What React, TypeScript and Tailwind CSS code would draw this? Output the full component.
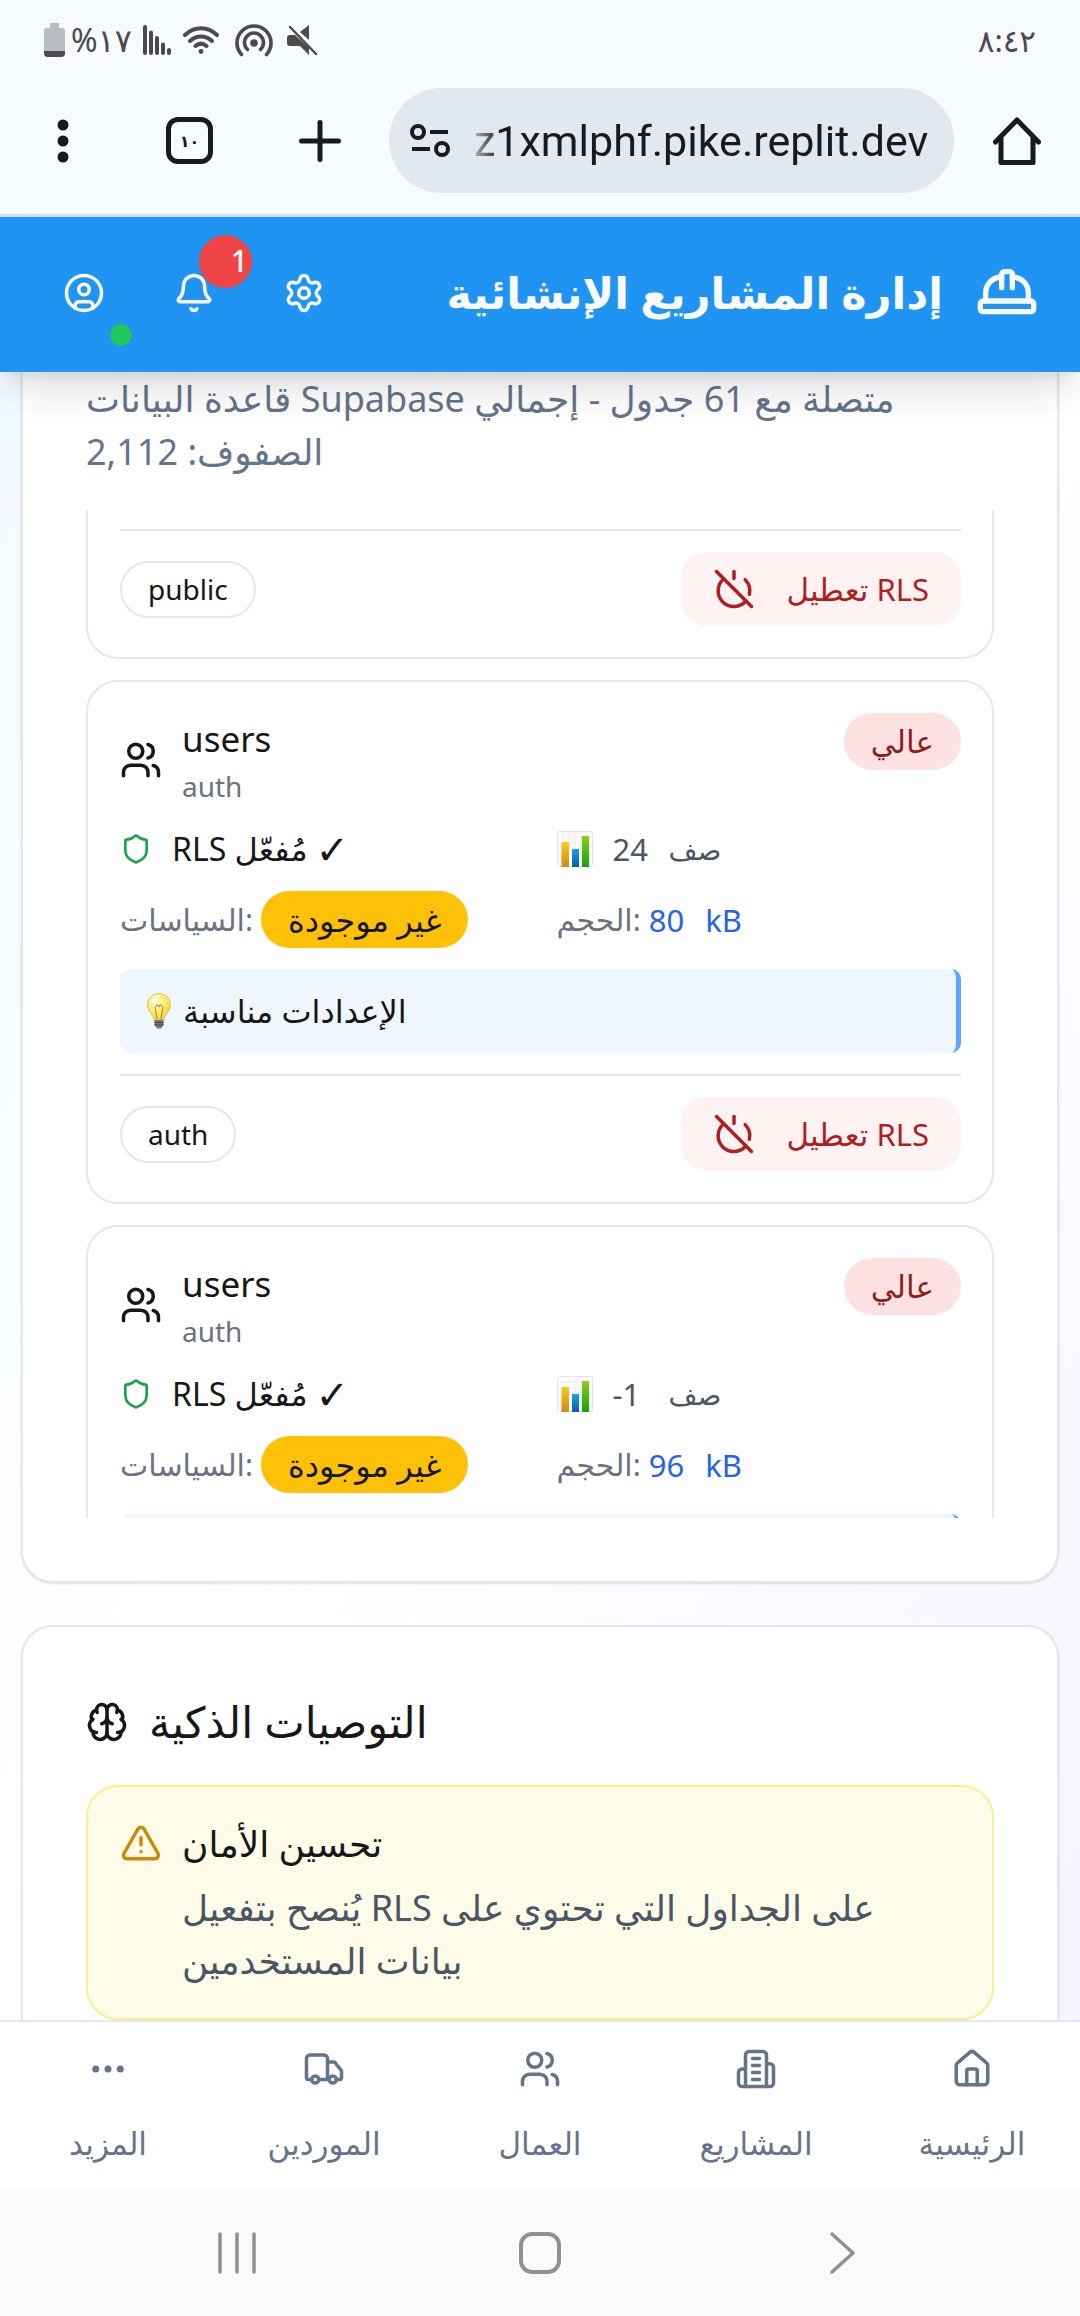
import React from "react";
import { AlertTriangle, Bell, Brain, CircleUser, Ellipsis, HardHat, House, PowerOff, Settings, Shield, Truck, Users } from "lucide-react";

type TableInfo = { rows: string; size: string; hint?: string; schema?: string };

const tables: TableInfo[] = [
  { rows: "24", size: "80", hint: "الإعدادات مناسبة", schema: "auth" },
  { rows: "-1", size: "96" },
];

function BuildingIcon() {
  return (
    <svg viewBox="0 0 24 24" className="size-[42px]" fill="none" stroke="currentColor" strokeWidth="2" strokeLinecap="round" strokeLinejoin="round">
      <path d="M6 22V4a2 2 0 0 1 2-2h8a2 2 0 0 1 2 2v18Z" />
      <path d="M6 12H4a2 2 0 0 0-2 2v6a2 2 0 0 0 2 2h2" />
      <path d="M18 9h2a2 2 0 0 1 2 2v9a2 2 0 0 1-2 2h-2" />
      <path d="M10 6h4M10 10h4M10 14h4M10 18h4" />
    </svg>
  );
}

function ChartEmoji() {
  return (
    <svg viewBox="0 0 36 36" className="size-9 shrink-0" role="img" aria-label="📊">
      <defs>
        <linearGradient id="barY" x1="0" y1="0" x2="0" y2="1"><stop offset="0" stopColor="#fbc91b" /><stop offset="1" stopColor="#d08a14" /></linearGradient>
        <linearGradient id="barB" x1="0" y1="0" x2="0" y2="1"><stop offset="0" stopColor="#18a5e2" /><stop offset="1" stopColor="#0a5ba0" /></linearGradient>
        <linearGradient id="barG" x1="0" y1="0" x2="0" y2="1"><stop offset="0" stopColor="#8fd014" /><stop offset="1" stopColor="#12a012" /></linearGradient>
      </defs>
      <rect x="0.5" y="0.5" width="35" height="35" rx="2" fill="#fafafa" stroke="#e4e4e4" />
      <path d="M6 1v34M12 1v34M18 1v34M24 1v34M30 1v34M1 6h34M1 12h34M1 18h34M1 24h34M1 30h34" stroke="#ececec" strokeWidth="0.7" />
      <rect x="4.500" y="11" width="7.500" height="25" fill="url(#barY)" />
      <rect x="15" y="18" width="7" height="18" fill="url(#barB)" />
      <rect x="25" y="5" width="7" height="31" fill="url(#barG)" />
    </svg>
  );
}

function BulbEmoji() {
  return (
    <svg viewBox="0 0 24 36" className="h-9 w-6 shrink-0" role="img" aria-label="💡">
      <defs>
        <radialGradient id="glow" cx="0.4" cy="0.3" r="0.8"><stop offset="0" stopColor="#fffbd0" /><stop offset="0.5" stopColor="#fcec6a" /><stop offset="1" stopColor="#e8c93c" /></radialGradient>
      </defs>
      <path d="M12 .5C5.500.5.500 5.500.500 12c0 5 3 7.500 5 10.500 1 1.700 1.500 3 1.700 4.500h9.600c.2-1.500.7-2.800 1.700-4.500 2-3 5-5.500 5-10.500C23.500 5.500 18.500.5 12 .5Z" fill="url(#glow)" stroke="#d3b64a" strokeWidth="0.8" />
      <path d="M10 26 8 14l2.500-2.500L12 14l1.500-2.500L16 14l-2 12" fill="none" stroke="#a8861f" strokeWidth="1" />
      <ellipse cx="7.500" cy="7" rx="3" ry="4" fill="#fff" opacity=".7" transform="rotate(35 7.500 7)" />
      <path d="M7.500 27h9v5l-2.500 3.500h-4L7.500 32Z" fill="#77797c" />
      <path d="M7.500 29.500h9M7.500 32h9" stroke="#3f4246" strokeWidth="1" />
    </svg>
  );
}

function StatusBar() {
  return (
    <div className="flex h-20 shrink-0 items-center justify-between px-11 text-[#4a4b4d]">
      <div className="flex items-center">
        <svg viewBox="0 0 21 34" className="h-[34px] w-[21px]">
          <path d="M6 0h9v5h3a3 3 0 0 1 3 3v22a4 4 0 0 1-4 4H4a4 4 0 0 1-4-4V8a3 3 0 0 1 3-3h3Z" fill="#b9bdc2" />
          <path d="M0 28h21v2a4 4 0 0 1-4 4H4a4 4 0 0 1-4-4Z" fill="#4a4b4d" />
        </svg>
        <span className="ml-[6px] w-[72px] text-[32px] leading-10 whitespace-nowrap">%١٧</span>
        <svg viewBox="0 0 28 30" className="h-[30px] w-7" stroke="currentColor" strokeWidth="4" strokeLinecap="round">
          <path d="M2 2v26M8 7.500V28M14 13v15M20 19.500V28M26 25v3" />
        </svg>
        <svg viewBox="0 0 36 28" className="ml-3 h-7 w-9" fill="none" stroke="currentColor" strokeWidth="4" strokeLinecap="round">
          <path d="M2 9c9.500-9 22.500-9 32 0M7 15c6.500-6 15.500-6 22 0M12.500 20c3.500-3 7.500-3 11 0" />
          <circle cx="18" cy="25.500" r="2.400" fill="currentColor" stroke="none" />
        </svg>
        <svg viewBox="0 0 38 34" className="ml-4 h-[34px] w-[38px]" fill="none" stroke="currentColor" strokeWidth="3.600" strokeLinecap="round">
          <path d="M6.500 31.500a17 17 0 1 1 25 0M12.500 26.500a9.500 9.500 0 1 1 13 0" />
          <circle cx="19" cy="20" r="3.800" fill="currentColor" stroke="none" />
        </svg>
        <svg viewBox="0 0 30 32" className="ml-3.5 h-8 w-[30px]" fill="currentColor">
          <path d="M22 1v15l-9-8ZM3 11h5l14 13v7l-9-9H3a3 3 0 0 1-3-3v-5a3 3 0 0 1 3-3Z" />
          <path d="m3 3 26 27" stroke="currentColor" strokeWidth="2.500" strokeLinecap="round" />
        </svg>
      </div>
      <time className="text-[31px] leading-10">٨:٤٢</time>
    </div>
  );
}

function BrowserBar() {
  return (
    <div className="flex h-[137px] shrink-0 items-center border-b-[3px] border-[#d3e4ec] pt-2 pb-[21px] text-[#171a1e]">
      <button type="button" aria-label="القائمة" className="ml-10 flex w-[46px] justify-center">
        <svg viewBox="0 0 12 44" className="h-11 w-3" fill="currentColor"><circle cx="6" cy="6" r="5.500" /><circle cx="6" cy="22" r="5.500" /><circle cx="6" cy="38" r="5.500" /></svg>
      </button>
      <button type="button" aria-label="علامات التبويب" className="ml-20 flex size-[47px] items-center justify-center rounded-xl border-[5px] border-current text-base leading-none font-bold">١٠</button>
      <button type="button" aria-label="علامة تبويب جديدة" className="ml-[86px]">
        <svg viewBox="0 0 42 42" className="size-[42px]" stroke="currentColor" strokeWidth="5" strokeLinecap="round"><path d="M21 2.500v37M2.500 21h37" /></svg>
      </button>
      <div className="ml-12 flex h-[105px] min-w-0 flex-1 items-center rounded-full bg-[#e1e8f0] pr-4 pl-[21px]">
        <svg viewBox="0 0 40 33" className="h-[33px] w-10 shrink-0" fill="none" stroke="currentColor" strokeWidth="4"><circle cx="8" cy="8" r="6" /><circle cx="32" cy="25" r="6" /><path d="M20 8h18M2 25h18" /></svg>
        <input aria-label="العنوان" readOnly value="z1xmlphf.pike.replit.dev" className="ml-6 w-full min-w-0 bg-transparent font-[Roboto,sans-serif] text-[43px] leading-[60px] outline-none [mask-image:linear-gradient(to_right,#0004,#000_26px)]" />
      </div>
      <button type="button" aria-label="الصفحة الرئيسية" className="mr-[39px] ml-[39px]">
        <svg viewBox="0 0 48 48" className="size-12" fill="none" stroke="currentColor" strokeWidth="5" strokeLinecap="round" strokeLinejoin="round"><path d="M2.500 25 24 3l21.500 22M8 20v25.500h32V20" /></svg>
      </button>
    </div>
  );
}

function AppHeader() {
  return (
    <header className="relative z-10 flex h-[155px] shrink-0 items-center justify-between bg-[#2094f3] pr-[41px] pb-1 pl-[63px] text-[#f8fafc] shadow-[0_26px_40px_-8px_rgba(0,0,0,0.12),0_10px_16px_-8px_rgba(0,0,0,0.10)]">
      <div className="flex gap-[68px]">
        <button type="button" aria-label="الحساب" className="relative">
          <CircleUser className="size-[42px]" />
          <span className="absolute -right-[27px] -bottom-[32px] size-[22px] rounded-full bg-[#22c55e]" />
        </button>
        <button type="button" aria-label="الإشعارات" className="relative">
          <Bell className="size-[42px]" />
          <span className="absolute -top-[37px] -right-[37px] flex size-[53px] items-center justify-end rounded-full bg-[#ef4444] pr-1 text-[30px] leading-none font-medium">1</span>
        </button>
        <button type="button" aria-label="الإعدادات"><Settings className="size-[42px]" /></button>
      </div>
      <div className="flex items-center gap-8">
        <h1 className="text-[43px] leading-[60px] font-bold whitespace-nowrap">إدارة المشاريع الإنشائية</h1>
        <HardHat className="size-16" />
      </div>
    </header>
  );
}

function CardFooter({ schema }: { schema: string }) {
  return (
    <div className="flex items-center justify-between border-t-2 border-[#e2e8f0] pt-[21px]">
      <span className="rounded-full border-2 border-[#e2e8f0] px-[26px] text-[28px] leading-[53px]">{schema}</span>
      <button type="button" className="flex h-[74px] items-center gap-8 rounded-[26px] bg-[#fef2f2] px-8 text-[#b01e1e]">
        <PowerOff className="size-[42px]" />
        <span className="text-[31px] leading-[42px] whitespace-nowrap">تعطيل RLS</span>
      </button>
    </div>
  );
}

function TableCard({ rows, size, hint, schema }: TableInfo) {
  return (
    <article className="flex shrink-0 flex-col gap-[21px] rounded-[32px] border-2 border-[#e2e8f0] bg-white py-[31px] pr-[31px] pl-8">
      <div className="flex items-start justify-between">
        <div className="flex items-center gap-5">
          <Users className="size-[42px]" />
          <div>
            <h3 className="text-[35px] leading-[52px]">users</h3>
            <p className="text-[28px] leading-[42px] text-[#6b7280]">auth</p>
          </div>
        </div>
        <span className="rounded-full bg-[#fee2e2] px-[27px] text-[31px] leading-[57px] text-[#8f1d1d]">عالي</span>
      </div>
      <div className="grid grid-cols-2 gap-x-8 gap-y-[21px] text-[31px] leading-[42px]">
        <div className="flex items-center gap-5">
          <Shield className="size-8 text-[#16a34a]" />
          <span className="flex items-center gap-2 whitespace-nowrap"><span className="text-[32px]">RLS مُفعّل</span><span className="text-[40px]">✓</span></span>
        </div>
        <div className="flex items-center gap-5 text-[#4b5563]">
          <ChartEmoji />
          <span className="min-w-[36px]">{rows}</span>
          <span className="text-[28px]">صف</span>
        </div>
        <div className="flex items-center gap-2">
          <span className="text-[30px] text-[#6b7280]">السياسات:</span>
          <span className="rounded-full bg-[#ffc107] px-[27px] text-[32px] leading-[57px] whitespace-nowrap">غير موجودة</span>
        </div>
        <div className="flex items-center gap-2">
          <span className="text-[30px] text-[#6b7280]">الحجم:</span>
          <span className="flex gap-[21px] text-[#2563eb]"><span>{size}</span><span>kB</span></span>
        </div>
      </div>
      <div className="flex min-h-[84px] items-center gap-3 rounded-[10px] border-r-[5px] border-[#60a5fa] bg-[#eff6ff] py-[21px] pl-[27px] text-[32px] leading-[42px]">
        {hint && (
          <>
            <BulbEmoji />
            <span>{hint}</span>
          </>
        )}
      </div>
      {schema && <CardFooter schema={schema} />}
    </article>
  );
}

const navItems = [
  { label: "المزيد", icon: <Ellipsis className="size-[42px]" /> },
  { label: "الموردين", icon: <Truck className="size-[42px]" /> },
  { label: "العمال", icon: <Users className="size-[42px]" /> },
  { label: "المشاريع", icon: <BuildingIcon /> },
  { label: "الرئيسية", icon: <House className="size-[42px]" /> },
];

export default function App() {
  return (
    <div dir="ltr" className="flex h-screen flex-col overflow-hidden bg-[#f7faff] font-['Noto_Sans','DejaVu_Sans',sans-serif] text-[#171717]">
      <StatusBar />
      <BrowserBar />
      <AppHeader />
      <main className="min-h-0 flex-1 overflow-hidden bg-linear-to-br from-[#f3faff] via-white to-[#f7f3ff] px-[21px]">
        <section className="rounded-b-[32px] border-2 border-t-0 border-[#e2e8f0] bg-white px-[63px] pb-[63px] shadow-sm">
          <p className="text-[36px] leading-[53px] text-[#64748b]">قاعدة البيانات Supabase متصلة مع 61 جدول - إجمالي الصفوف: 2,112</p>
          <div className="mt-8 flex h-[1008px] flex-col gap-[21px] overflow-hidden">
            <article className="shrink-0 rounded-b-[32px] border-2 border-t-0 border-[#e2e8f0] bg-white pt-[19px] pr-[31px] pb-[31px] pl-8">
              <CardFooter schema="public" />
            </article>
            {tables.map((t) => (
              <TableCard key={t.size} {...t} />
            ))}
          </div>
        </section>
        <section className="mt-[42px] rounded-[32px] border-2 border-[#e2e8f0] bg-white p-[63px] shadow-sm">
          <h2 className="flex h-16 items-center gap-[21px] text-[43px] leading-[60px]"><Brain className="size-[42px]" />التوصيات الذكية</h2>
          <div className="mt-[31px] flex gap-5 rounded-[32px] border-2 border-[#fbee92] bg-[#fefce8] py-[31px] pr-[31px] pl-8">
            <AlertTriangle className="mt-1 size-[42px] shrink-0 text-[#ca8a04]" />
            <div>
              <h3 className="text-[36px] leading-[52px]">تحسين الأمان</h3>
              <p className="mt-[11px] text-[36px] leading-[53px] text-[#4b5563]">يُنصح بتفعيل RLS على الجداول التي تحتوي على بيانات المستخدمين</p>
            </div>
          </div>
        </section>
      </main>
      <nav className="grid h-[170px] shrink-0 grid-cols-5 border-t-2 border-[#e2e8f0] bg-white text-[#64748b]">
        {navItems.map((n) => (
          <a key={n.label} href="#" className="flex flex-col items-center gap-8 pt-[26px] text-[31px] leading-[42px]">
            {n.icon}
            <span>{n.label}</span>
          </a>
        ))}
      </nav>
      <div className="flex h-[126px] shrink-0 items-center justify-around bg-[#fafafa] px-[8%] text-[#909090]">
        <button type="button" aria-label="التطبيقات الأخيرة"><svg viewBox="0 0 40 42" className="h-[42px] w-10" stroke="currentColor" strokeWidth="3.500" strokeLinecap="round"><path d="M3 2v38M20 2v38M37 2v38" /></svg></button>
        <button type="button" aria-label="الشاشة الرئيسية"><svg viewBox="0 0 42 42" className="size-[42px]" fill="none" stroke="currentColor" strokeWidth="4"><rect x="2" y="2" width="38" height="38" rx="11" /></svg></button>
        <button type="button" aria-label="رجوع"><svg viewBox="0 0 40 42" className="h-[42px] w-10" fill="none" stroke="currentColor" strokeWidth="3.500" strokeLinecap="round" strokeLinejoin="round"><path d="m9 2 21 19L9 40" /></svg></button>
      </div>
    </div>
  );
}
